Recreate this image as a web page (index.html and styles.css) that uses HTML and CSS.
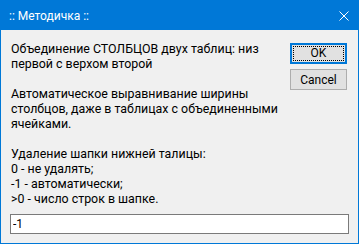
FILE: index.html
```html
<!DOCTYPE html>
<html lang="ru">
<head>
    <meta charset="UTF-8">
    <title>:: Методичка ::</title>
    <link rel="stylesheet" href="styles.css">
</head>
<body>
    <div class="window">
        <div class="titlebar">
            <span class="title">:: Методичка ::</span>
            <span class="close">
                <svg width="10" height="10" viewBox="0 0 10 10">
                    <path d="M0.5 0.5 L9.5 9.5 M9.5 0.5 L0.5 9.5" stroke="#fff" stroke-width="1" fill="none"/>
                </svg>
            </span>
        </div>
        <div class="client">
            <div class="main">
                <div class="message">
                    <p>Объединение СТОЛБЦОВ двух таблиц: низ<br>первой с верхом второй</p>
                    <p>Автоматическое выравнивание ширины<br>столбцов, даже в таблицах с объединенными<br>ячейками.</p>
                    <p>Удаление шапки нижней талицы:<br>0 - не удалять;<br>-1 - автоматически;<br>&gt;0 - число строк в шапке.</p>
                </div>
                <div class="buttons">
                    <button class="btn default"><span>OK</span></button>
                    <button class="btn">Cancel</button>
                </div>
            </div>
            <input type="text" class="answer" value="-1">
        </div>
    </div>
</body>
</html>
```

FILE: styles.css
```css
* {
    box-sizing: border-box;
}

body {
    margin: 0;
    padding: 0;
    background-color: #f0f0f0;
    font-family: Roboto, 'Noto Sans', sans-serif;
    font-size: 12px;
    color: #000;
}

.window {
    width: 359px;
    height: 244px;
    border: 1px solid #0078d7;
    display: flex;
    flex-direction: column;
    background-color: #f0f0f0;
}

.titlebar {
    flex-shrink: 0;
    height: 29px;
    background-color: #0078d7;
    color: #fff;
    display: flex;
    align-items: center;
    justify-content: space-between;
    padding: 0 9px 0 8px;
}

.title {
    font-size: 12px;
    margin-top: 1px;
}

.close {
    display: flex;
    margin-top: 1px;
}

.client {
    flex: 1;
    display: flex;
    flex-direction: column;
    padding: 11px 10px 9px 9px;
}

.main {
    flex: 1;
    display: flex;
}

.message {
    flex: 1;
    padding-left: 1px;
    line-height: 15px;
    font-size: 12.4px;
}

.message p {
    margin: 0 0 15px 0;
}

.message p:last-child {
    margin-bottom: 0;
}

.buttons {
    width: 57px;
    margin-top: 2px;
    margin-right: 1px;
    display: flex;
    flex-direction: column;
    gap: 5px;
}

.btn {
    height: 21px;
    padding: 0;
    font-family: inherit;
    font-size: 12px;
    color: #000;
    background-color: #e1e1e1;
    border: 1px solid #adadad;
}

.btn.default {
    border-color: #0078d7;
    box-shadow: inset 0 0 0 1px #0078d7;
    padding: 2px;
}

.btn.default span {
    display: block;
    height: 100%;
    line-height: 13px;
    border: 1px dotted #000;
}

.answer {
    height: 20px;
    width: 339px;
    border: 1px solid #7a7a7a;
    background-color: #fff;
    padding: 0 2px;
    font-family: inherit;
    font-size: 12px;
    color: #000;
    outline: none;
}
```
